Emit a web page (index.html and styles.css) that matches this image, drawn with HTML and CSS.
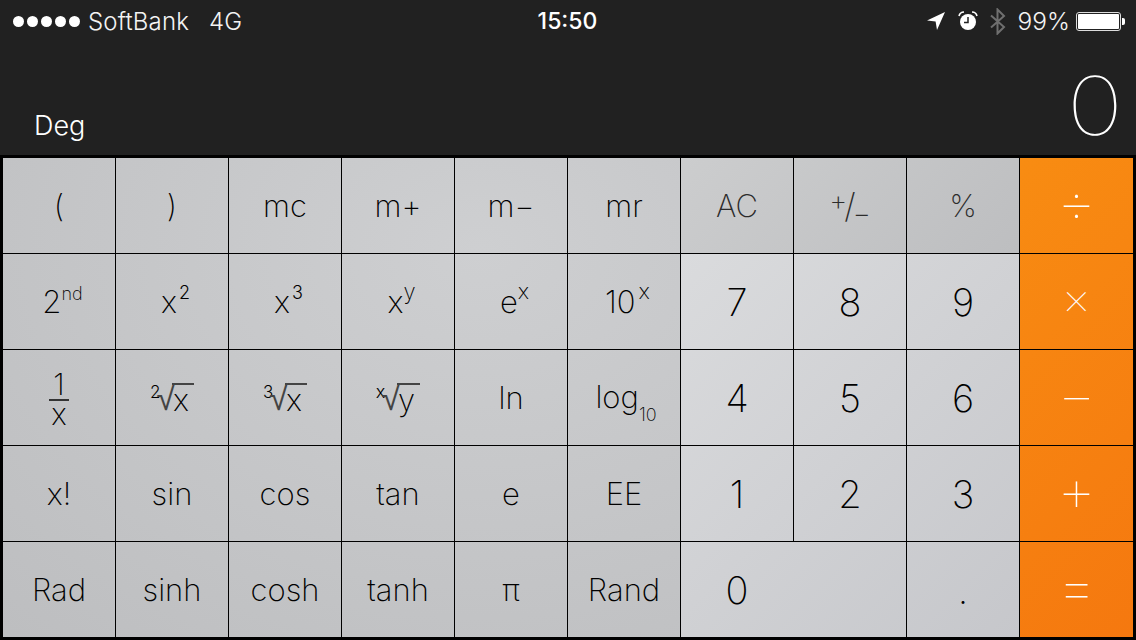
FILE: index.html
```html
<!DOCTYPE html>
<html lang="en">
<head>
<meta charset="utf-8">
<title>Calculator</title>
<link rel="stylesheet" href="styles.css">
</head>
<body>
<div class="screen">
  <header class="status">
    <div class="status-left">
      <span class="dots"><i></i><i></i><i></i><i></i><i></i></span>
      <span class="carrier">SoftBank</span>
      <span class="network">4G</span>
    </div>
    <div class="time">15:50</div>
    <div class="status-right">
      <svg class="ico-loc" viewBox="0 0 18 18"><path d="M0 8.500 18 0 10 18 8.600 9.600Z" fill="#fff"/></svg>
      <svg class="ico-alarm" viewBox="0 0 20 20"><circle cx="10" cy="11" r="8" fill="#fff"/><path d="M1 5 Q2 1 6 1M19 5Q18 1 14 1" fill="none" stroke="#fff" stroke-width="1.600"/><path d="M10 6v5.500H6" fill="none" stroke="#222" stroke-width="1.500"/></svg>
      <svg class="ico-bt" viewBox="0 0 16 27"><path d="M1 7.500 14 19 7.500 25.500V1.500L14 8 1 19.500" fill="none" stroke="#6f6f6f" stroke-width="2"/></svg>
      <span class="pct">99%</span>
      <span class="battery"><span class="battery-fill"></span></span><span class="battery-tip"></span>
    </div>
  </header>
  <div class="display">
    <span class="deg">Deg</span>
    <span class="value">0</span>
  </div>
  <main class="keypad">
    <div class="key sci">(</div>
    <div class="key sci">)</div>
    <div class="key sci">mc</div>
    <div class="key sci">m+</div>
    <div class="key sci">m−</div>
    <div class="key sci">mr</div>
    <div class="key fn">AC</div>
    <div class="key fn"><span class="pm"><span class="pm-a">+</span><span class="pm-s">/</span><span class="pm-b">−</span></span></div>
    <div class="key fn">%</div>
    <div class="key op"><span class="op-div">÷</span></div>

    <div class="key sci"><span class="pow">2<sup class="up up-nd">nd</sup></span></div>
    <div class="key sci"><span class="pow">x<sup class="up up-n">2</sup></span></div>
    <div class="key sci"><span class="pow">x<sup class="up up-n">3</sup></span></div>
    <div class="key sci"><span class="pow">x<sup class="up">y</sup></span></div>
    <div class="key sci"><span class="pow">e<sup class="up">x</sup></span></div>
    <div class="key sci"><span class="pow">10<sup class="up up-x">x</sup></span></div>
    <div class="key num">7</div>
    <div class="key num">8</div>
    <div class="key num">9</div>
    <div class="key op"><span class="op-mul">×</span></div>

    <div class="key sci"><span class="frac"><span class="frac-top">1</span><span class="frac-bot">x</span></span></div>
    <div class="key sci"><span class="root"><span class="root-i">2</span><span class="root-s">√</span><span class="root-r">x</span></span></div>
    <div class="key sci"><span class="root"><span class="root-i">3</span><span class="root-s">√</span><span class="root-r">x</span></span></div>
    <div class="key sci"><span class="root"><span class="root-i root-ix">x</span><span class="root-s">√</span><span class="root-r">y</span></span></div>
    <div class="key sci">ln</div>
    <div class="key sci"><span class="log">log<sub class="down">10</sub></span></div>
    <div class="key num">4</div>
    <div class="key num">5</div>
    <div class="key num">6</div>
    <div class="key op"><span class="op-min">−</span></div>

    <div class="key sci">x!</div>
    <div class="key sci">sin</div>
    <div class="key sci">cos</div>
    <div class="key sci">tan</div>
    <div class="key sci">e</div>
    <div class="key sci">EE</div>
    <div class="key num">1</div>
    <div class="key num">2</div>
    <div class="key num">3</div>
    <div class="key op"><span class="op-plus">+</span></div>

    <div class="key sci">Rad</div>
    <div class="key sci">sinh</div>
    <div class="key sci">cosh</div>
    <div class="key sci">tanh</div>
    <div class="key sci">π</div>
    <div class="key sci">Rand</div>
    <div class="key num zero"><span class="zero-label">0</span></div>
    <div class="key num">.</div>
    <div class="key op"><span class="op-eq">=</span></div>
  </main>
</div>
</body>
</html>
```
FILE: styles.css
```css
* { box-sizing: border-box; }
html, body { margin: 0; height: 100%; }
body { background: #212121; overflow: hidden; font-family: Inter, "Liberation Sans", sans-serif; }
.screen { width: 1136px; height: 640px; display: flex; flex-direction: column; opacity: .999; }

.status { height: 42px; padding: 0 11px 0 8px; display: grid; grid-template-columns: 1fr auto 1fr; align-items: center; color: #f4f4f4; font-size: 24px; font-weight: 300; }
.status-left { display: flex; align-items: center; padding-left: 5px; }
.dots { display: flex; gap: 3px; margin-right: 8px; }
.dots i { width: 11px; height: 11px; border-radius: 50%; background: #fff; }
.carrier { letter-spacing: .15px; }
.network { margin-left: 20px; }
.time { font-weight: 500; font-size: 23px; color: #fff; margin-left: 2px; }
.status-right { display: flex; align-items: center; justify-content: flex-end; }
.ico-loc { width: 18px; height: 18px; margin-right: 13px; }
.ico-alarm { width: 20px; height: 20px; margin-right: 12px; }
.ico-bt { width: 16px; height: 27px; margin-right: 12px; }
.pct { margin-right: 6px; font-size: 24.500px; }
.battery { width: 45px; height: 19px; border: 1px solid #ddd; border-radius: 3px; padding: 1px; display: block; }
.battery-fill { display: block; height: 100%; background: #fff; border-radius: 1px; }
.battery-tip { width: 3px; height: 7px; background: #fff; border-radius: 0 2px 2px 0; margin-left: 1px; }

.display { height: 113px; padding: 0 17px 0 34px; display: flex; justify-content: space-between; align-items: flex-end; color: #fff; }
.deg { font-size: 27px; font-weight: 300; margin-bottom: 13px; }
.value { font-weight: 100; font-size: 81px; line-height: 1; margin-bottom: 8px; transform: scaleX(1.18); }

.keypad { flex: 1; background: #000; padding: 3px; display: grid; grid-template-columns: repeat(9, 112px) 113px; grid-template-rows: repeat(5, 95px); gap: 1px; }
.key { display: flex; align-items: center; justify-content: center; font-size: 31px; font-weight: 250; line-height: 1; background-attachment: fixed; }
.sci { color: #000; background-image: radial-gradient(ellipse 700px 520px at 480px 250px, #cecfd1, #bdbec0); }
.fn { color: #2c2c2c; background-image: linear-gradient(135deg, #cccdce 593px, #bdbec0 900px); }
.num { color: #000; font-size: 38px; background-image: linear-gradient(135deg, #dadbdd 661px, #c6c7cb 1170px); }
.op { color: #fff; font-weight: 130; padding-bottom: 7px; background-image: linear-gradient(135deg, #f88c12 833px, #f5780f 1251px); }
.op-div { font-size: 62px; }
.op-mul { font-size: 46px; }
.op-min { font-size: 60px; }
.op-plus { font-size: 62px; }
.op-eq { font-size: 64px; }
.zero { grid-column: span 2; justify-content: flex-start; }
.zero-label { width: 112px; text-align: center; }

.pow { margin-left: 7px; }
.log { margin-left: 4px; }
.up { font-size: 22px; line-height: 0; vertical-align: 14px; }
.up-nd { font-size: 18px; vertical-align: 13px; }
.up-n { font-size: 18px; margin-left: 2px; font-weight: 300; vertical-align: 14px; }
.up-x { margin-left: 3px; }
.down { font-size: 18px; line-height: 0; vertical-align: -13px; }
.pm { display: inline-flex; align-items: center; }
.pm-a { font-size: 28px; transform: translateY(-6px); }
.pm-s { font-size: 34px; margin: 0 -3px; }
.pm-b { font-size: 28px; transform: translateY(7px); }

.frac { display: flex; flex-direction: column; align-items: center; line-height: 1; }
.frac-top { font-size: 30px; height: 30px; }
.frac-bot { font-size: 30px; height: 28px; border-top: 2px solid #333; padding: 0 2px; line-height: 26px; }

.root { display: inline-flex; align-items: flex-end; }
.root-i { font-size: 17px; line-height: 1; margin-bottom: 14px; margin-right: -4px; font-weight: 300; }
.root-ix { font-size: 18px; }
.root-s { font-family: "Liberation Sans", sans-serif; font-size: 34px; font-weight: 400; color: #444; line-height: 1; }
.root-r { border-top: 2px solid #444; font-size: 31px; line-height: 30px; padding: 0 5px 0 1px; margin-left: -3px; }
```
